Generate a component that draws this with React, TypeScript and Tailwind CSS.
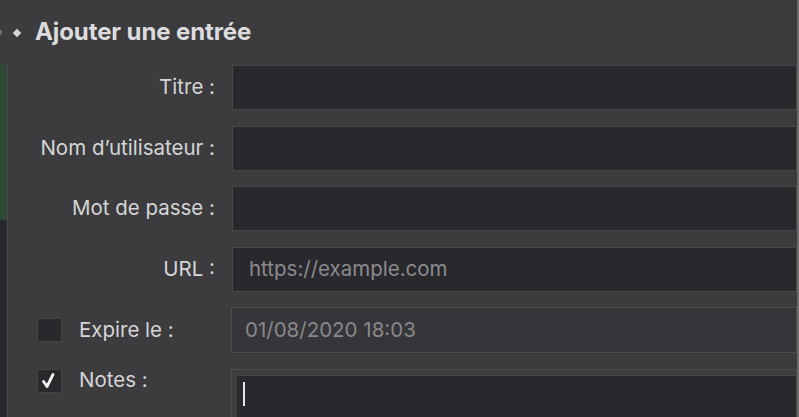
import React from "react";

const labelCls =
  "w-[224px] pr-[17px] text-right text-[20.5px] text-[#d5d5d7] leading-none";

function TextRow({ label, children }: { label: string; children?: React.ReactNode }) {
  return (
    <div className="flex items-center h-[45px]">
      <div className={labelCls}>{label}</div>
      <div className="flex-1 h-[45px] bg-[#29282d] border border-[#48484b] flex items-center pl-[16px] text-[20.5px] text-[#8b8b8e]">
        {children}
      </div>
    </div>
  );
}

export default function App() {
  return (
    <div
      className="w-[799px] h-[417px] overflow-hidden bg-[#3c3c3e] flex flex-col relative"
      style={{ fontFamily: "Inter, 'Noto Sans', sans-serif" }}
    >
      {/* header */}
      <div className="h-[65px] flex items-center shrink-0 relative">
        <div className="absolute left-0 top-[30px] w-[2px] h-[5px] bg-[#6a6a6c]" />
        <div className="ml-[14px] w-[6px] h-[6px] bg-[#d8d8da] rotate-45" />
        <div className="ml-[15px] text-[24px] font-bold text-[#dcdcde] tracking-[-0.1px] -mt-[1px]">
          Ajouter une entrée
        </div>
      </div>

      <div className="flex flex-1 min-h-0">
        {/* sidebar */}
        <div className="w-[8px] shrink-0 flex flex-col border-r border-[#4a4a4d]">
          <div className="h-[155px] bg-[#2f4833]" />
          <div className="flex-1 bg-[#28272c]" />
        </div>

        {/* form */}
        <div className="flex-1 flex flex-col gap-[15.5px] pr-[2px]">
          <TextRow label="Titre :" />
          <TextRow label="Nom d’utilisateur :" />
          <TextRow label="Mot de passe :" />
          <TextRow label="URL :">https://example.com</TextRow>

          <div className="flex items-center h-[46px]">
            <div className="w-[223px] flex items-center">
              <div className="ml-[29px] w-[25px] h-[24px] bg-[#29282d] border border-[#444447] rounded-[2px]" />
              <div className="ml-[17px] text-[20.5px] text-[#d5d5d7] leading-none">Expire le :</div>
            </div>
            <div className="flex-1 h-[46px] bg-[#363539] border border-[#4b4b4e] flex items-center pl-[13px] text-[20.5px] text-[#88888b]">
              01/08/2020 18:03
            </div>
          </div>

          <div className="flex items-start h-[60px]">
            <div className="w-[223px] flex items-center h-[24px]">
              <div className="ml-[29px] w-[25px] h-[24px] bg-[#29282d] border border-[#444447] rounded-[2px] flex items-center justify-center">
                <svg width="18" height="18" viewBox="0 0 18 18" className="-ml-[2px]">
                  <path
                    d="M3.5 9.5 L7 14.5 L13 2.5"
                    fill="none"
                    stroke="#f2f2f4"
                    strokeWidth="2.8"
                    strokeLinecap="round"
                    strokeLinejoin="round"
                  />
                </svg>
              </div>
              <div className="ml-[17px] text-[20.5px] text-[#d5d5d7] leading-none">Notes :</div>
            </div>
            <div className="flex-1 h-[60px] bg-[#3e3e40] border border-[#4c4c4f] pt-[5px] pl-[5px]">
              <div className="h-full bg-[#29282d] border-t border-[#444447] pl-[6px] pt-[6px]">
                <div className="w-[2px] h-[24px] bg-[#e8e8ea]" />
              </div>
            </div>
          </div>
        </div>
        <div className="w-[2px] bg-[#6a6a6c] absolute right-0 top-0 h-full" />
      </div>
    </div>
  );
}
